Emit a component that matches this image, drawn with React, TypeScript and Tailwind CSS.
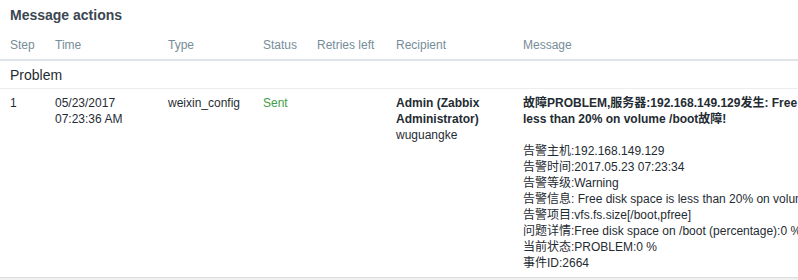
const font = { fontFamily: '"Liberation Sans", Arial, "Noto Sans CJK SC", sans-serif' }

const headers = ['Step', 'Time', 'Type', 'Status', 'Retries left', 'Recipient', 'Message']

const details = [
  '告警主机:192.168.149.129',
  '告警时间:2017.05.23 07:23:34',
  '告警等级:Warning',
  '告警信息: Free disk space is less than 20% on volume /boot',
  '告警项目:vfs.fs.size[/boot,pfree]',
  '问题详情:Free disk space on /boot (percentage):0 %',
  '当前状态:PROBLEM:0 %',
  '事件ID:2664',
]

const cols = 'grid grid-cols-[45px_113px_95px_54px_79px_127px_1fr]'

function Line({ children, bold }: { children: React.ReactNode; bold?: boolean }) {
  return <div className={`h-[16px] leading-[16px] whitespace-nowrap ${bold ? 'font-bold' : ''}`}>{children}</div>
}

export default function App() {
  return (
    <div className="h-[280px] w-[798px] overflow-hidden bg-white text-[12px] text-[#1f2c33]" style={font}>
      <div className="flex h-[277px] flex-col overflow-hidden">
        <h4 className="px-[10px] pt-[6px] text-[14px] leading-[18px] font-bold text-[#3a4651]">Message actions</h4>

        <div className={`${cols} mt-[13px] border-b-2 border-[#dfe4e7] px-[10px] pb-[6px] leading-[16px] text-[#768d99]`}>
          {headers.map((h) => (
            <div key={h} className="h-[16px] whitespace-nowrap">
              {h}
            </div>
          ))}
        </div>

        <div className="h-[28px] border-b border-[#ebeef0] px-[10px] pt-[5px] text-[14px] leading-[18px]">Problem</div>

        <div className={`${cols} px-[10px] pt-[6px] leading-[16px]`}>
          <Line>1</Line>
          <div>
            <Line>05/23/2017</Line>
            <Line>07:23:36 AM</Line>
          </div>
          <Line>weixin_config</Line>
          <Line>
            <span className="text-[#429e47]">Sent</span>
          </Line>
          <div />
          <div className="pr-[10px]">
            <Line bold>Admin (Zabbix</Line>
            <Line bold>Administrator)</Line>
            <Line>wuguangke</Line>
          </div>
          <div>
            <Line bold>故障PROBLEM,服务器:192.168.149.129发生: Free disk space is</Line>
            <Line bold>less than 20% on volume /boot故障!</Line>
            <div className="h-[16px]" />
            {details.map((line) => (
              <Line key={line}>{line}</Line>
            ))}
          </div>
        </div>
      </div>
      <div className="h-[3px] border-t border-[#dcdcdc] bg-[#f0f0f0]" />
    </div>
  )
}
